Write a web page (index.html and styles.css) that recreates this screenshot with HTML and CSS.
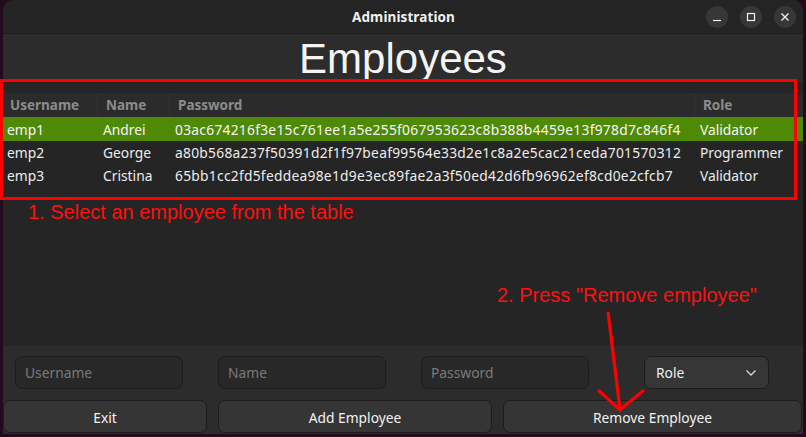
FILE: index.html
```html
<!DOCTYPE html>
<html lang="en">
<head>
<meta charset="utf-8">
<title>Administration</title>
<link rel="stylesheet" href="styles.css">
</head>
<body>
<div class="window">
  <header class="titlebar">
    <span></span>
    <span class="title">Administration</span>
    <div class="wm-buttons">
      <span class="wm-btn"><svg width="22" height="22" viewBox="0 0 22 22"><line x1="7" y1="14.5" x2="15" y2="14.5" stroke="#f2f2f2" stroke-width="1.2"/></svg></span>
      <span class="wm-btn"><svg width="22" height="22" viewBox="0 0 22 22"><rect x="7.5" y="7.5" width="7" height="7" fill="none" stroke="#f2f2f2" stroke-width="1.2"/></svg></span>
      <span class="wm-btn"><svg width="22" height="22" viewBox="0 0 22 22"><path d="M7.5 7.5 L14.5 14.5 M14.5 7.5 L7.5 14.5" stroke="#f2f2f2" stroke-width="1.3"/></svg></span>
    </div>
  </header>
  <h1 class="heading">Employees</h1>
  <section class="table-panel">
    <div class="table">
      <div class="row head">
        <div class="c c-user">Username</div>
        <div class="c c-name">Name</div>
        <div class="c c-pass">Password</div>
        <div class="c c-role">Role</div>
      </div>
      <div class="row selected">
        <div class="c c-user">emp1</div>
        <div class="c c-name">Andrei</div>
        <div class="c c-pass hash">03ac674216f3e15c761ee1a5e255f067953623c8b388b4459e13f978d7c846f4</div>
        <div class="c c-role">Validator</div>
      </div>
      <div class="row">
        <div class="c c-user">emp2</div>
        <div class="c c-name">George</div>
        <div class="c c-pass hash">a80b568a237f50391d2f1f97beaf99564e33d2e1c8a2e5cac21ceda701570312</div>
        <div class="c c-role">Programmer</div>
      </div>
      <div class="row">
        <div class="c c-user">emp3</div>
        <div class="c c-name">Cristina</div>
        <div class="c c-pass hash">65bb1cc2fd5feddea98e1d9e3ec89fae2a3f50ed42d6fb96962ef8cd0e2cfcb7</div>
        <div class="c c-role">Validator</div>
      </div>
    </div>
  </section>
  <section class="form">
    <div class="inputs">
      <input class="field f-user" placeholder="Username">
      <input class="field f-name" placeholder="Name">
      <input class="field f-pass" placeholder="Password">
      <div class="combo">
        <span>Role</span>
        <svg width="12" height="8" viewBox="0 0 12 8"><path d="M1.5 1.5 L6 6 L10.5 1.5" fill="none" stroke="#d8d8d8" stroke-width="1.3"/></svg>
      </div>
    </div>
    <div class="buttons">
      <button class="btn b-exit">Exit</button>
      <button class="btn b-add">Add Employee</button>
      <button class="btn b-remove">Remove Employee</button>
    </div>
  </section>
</div>

<div class="annot-box"></div>
<div class="annot-text t1">1. Select an employee from the table</div>
<div class="annot-text t2">2. Press "Remove employee"</div>
<svg class="annot-arrow" width="806" height="437" viewBox="0 0 806 437">
  <path d="M608 312 L620 409" stroke="#ff0000" stroke-width="3.2" fill="none"/>
  <path d="M598 390 L620 410 L644 390" stroke="#ff0000" stroke-width="3.2" fill="none"/>
</svg>
</body>
</html>
```

FILE: styles.css
```css
html, body {
  margin: 0;
  padding: 0;
}
body {
  width: 806px;
  height: 437px;
  background: #230a1c;
  position: relative;
  overflow: hidden;
  font-family: "Noto Sans", "DejaVu Sans", sans-serif;
}
.window {
  margin-left: 3px;
  width: 800px;
  height: 434px;
  background: #2c2c2c;
  border-radius: 11px 11px 0 0;
  overflow: hidden;
  display: flex;
  flex-direction: column;
}
.titlebar {
  height: 33px;
  flex: none;
  background: #242424;
  border-bottom: 1px solid #1b1b1b;
  display: grid;
  grid-template-columns: 1fr auto 1fr;
  align-items: center;
}
.title {
  color: #f0f0f0;
  font-weight: 700;
  font-size: 13.5px;
  letter-spacing: 0.1px;
  padding-left: 1px;
}
.wm-buttons {
  display: flex;
  justify-content: flex-end;
  gap: 12px;
  padding-right: 7px;
  padding-top: 1px;
}
.wm-btn {
  width: 22px;
  height: 22px;
  border-radius: 50%;
  background: #373737;
  display: flex;
}
.heading {
  margin: 0;
  height: 48px;
  flex: none;
  text-align: center;
  font-family: "Liberation Sans", Arial, sans-serif;
  font-weight: 400;
  font-size: 42px;
  line-height: 50px;
  color: #f4f4f4;
}
.table-panel {
  height: 264px;
  flex: none;
  background: #252525;
  padding-top: 11px;
  box-sizing: border-box;
}
.row {
  display: flex;
  height: 23px;
  align-items: center;
  color: #ececec;
  font-size: 13.8px;
  white-space: nowrap;
}
.row.head {
  height: 24px;
  background: #2b2b2b;
  color: #8c8c8c;
  font-weight: 700;
  font-size: 13.5px;
}
.row.selected {
  height: 24px;
  background: #4e8a05;
  color: #f6f6f6;
}
.c {
  box-sizing: border-box;
  padding-left: 5px;
  height: 100%;
  display: flex;
  align-items: center;
}
.c-user { width: 95px; padding-left: 4px; }
.c-name { width: 72px; }
.c-pass { width: 525px; }
.c-role { flex: 1; }
.hash { letter-spacing: 0.27px; }
.head .c { padding-left: 8px; border-right: 1px solid #333333; }
.head .c-user { padding-left: 7px; }
.head .c-role { border-right: none; }
.form {
  flex: 1;
  background: #2c2c2c;
  padding-top: 10px;
  box-sizing: border-box;
}
.inputs {
  display: flex;
  align-items: center;
  height: 33px;
  padding-left: 12px;
}
.field {
  box-sizing: border-box;
  width: 168px;
  height: 33px;
  margin: 0;
  border: 1px solid #1c1c1c;
  border-radius: 7px;
  background: #282828;
  padding: 0 0 0 9px;
  font-family: "Noto Sans", "DejaVu Sans", sans-serif;
  font-size: 13.8px;
  color: #eee;
  outline: none;
}
.field::placeholder { color: #7a7a7a; }
.f-name, .f-pass { margin-left: 35px; }
.combo {
  box-sizing: border-box;
  margin-left: 55px;
  width: 125px;
  height: 33px;
  border: 1px solid #1c1c1c;
  border-radius: 7px;
  background: #363636;
  color: #f0f0f0;
  font-size: 13.8px;
  display: flex;
  align-items: center;
  justify-content: space-between;
  padding: 0 11px 0 11px;
}
.buttons {
  display: flex;
  margin-top: 11px;
  gap: 11px;
}
.btn {
  box-sizing: border-box;
  height: 33px;
  margin: 0;
  border: 1px solid #1c1c1c;
  border-radius: 7px;
  background: #353535;
  color: #f2f2f2;
  font-family: "Noto Sans", "DejaVu Sans", sans-serif;
  font-size: 13.8px;
  padding: 2px 0 0;
}
.b-exit { width: 204px; }
.b-add { width: 274px; }
.b-remove { width: 299px; }

.annot-box {
  position: absolute;
  left: 0;
  top: 79px;
  width: 797px;
  height: 121px;
  box-sizing: border-box;
  border: 3px solid #ff0000;
}
.annot-text {
  position: absolute;
  font-family: "Liberation Sans", Arial, sans-serif;
  font-size: 20px;
  line-height: 20px;
  color: #ff1010;
  white-space: nowrap;
}
.t1 { left: 28px; top: 202px; }
.t2 { left: 497px; top: 285px; }
.annot-arrow {
  position: absolute;
  left: 0;
  top: 0;
}
```
